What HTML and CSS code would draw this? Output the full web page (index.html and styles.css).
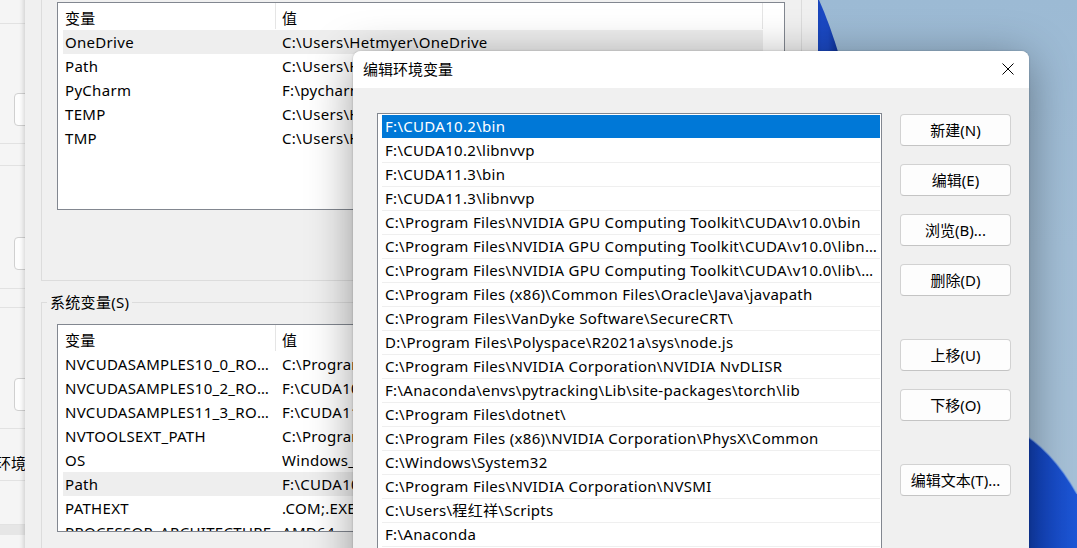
FILE: index.html
```html
<!DOCTYPE html>
<html lang="zh-CN">
<head>
<meta charset="utf-8">
<title>编辑环境变量</title>
<link rel="stylesheet" href="styles.css">
</head>
<body>
<div class="desktop">
  <svg class="bloom" width="1077" height="548" viewBox="0 0 1077 548" aria-hidden="true">
    <defs>
      <linearGradient id="bloomTop" x1="0" y1="0" x2="1" y2="0">
        <stop offset="0" stop-color="#1d4fd0"/>
        <stop offset="0.7" stop-color="#1a47c0"/>
        <stop offset="1" stop-color="#0e2f8e"/>
      </linearGradient>
      <linearGradient id="bloomBottom" x1="0" y1="0" x2="1" y2="0">
        <stop offset="0" stop-color="#0a3296"/>
        <stop offset="0.5" stop-color="#1446c0"/>
        <stop offset="1" stop-color="#1d56d6"/>
      </linearGradient>
    </defs>
    <path d="M800 0 L819 0 Q829 22 840 58 L800 58 Z" fill="url(#bloomTop)"/>
    <path d="M1005 424 Q1048 442 1077 494 L1077 548 L1005 548 Z" fill="url(#bloomBottom)"/>
    <path d="M1005 424 Q1048 442 1077 494" fill="none" stroke="#7ea6e6" stroke-width="1.5" opacity="0.6"/>
  </svg>

  <section class="win win-left">
    <div class="lw-block lw-top"></div>
    <div class="lw-block lw-card lw-card-a"><span class="lw-btn"></span></div>
    <div class="lw-block lw-gap lw-gap-a"></div>
    <div class="lw-block lw-card lw-card-b"><span class="lw-btn"></span></div>
    <div class="lw-block lw-gap lw-gap-b"></div>
    <div class="lw-block lw-card lw-card-c"><span class="lw-btn"></span></div>
    <div class="lw-block lw-text"><span class="lw-label">环境变量</span></div>
    <div class="lw-block lw-rest"></div>
    <div class="lw-band"></div>
  </section>

  <section class="win win-env">
    <div class="group group-user">
      <div class="listview">
        <div class="lv-head">
          <span class="lv-hcell lv-c1">变量</span>
          <span class="lv-hcell lv-c2">值</span>
          <span class="lv-hcell lv-c3"></span>
        </div>
        <div class="lv-row is-sel"><span class="lv-cell lv-c1">OneDrive</span><span class="lv-cell lv-c2">C:\Users\Hetmyer\OneDrive</span></div>
        <div class="lv-row"><span class="lv-cell lv-c1">Path</span><span class="lv-cell lv-c2">C:\Users\Hetmyer\AppData\Local\Microsoft\WindowsApps;</span></div>
        <div class="lv-row"><span class="lv-cell lv-c1">PyCharm</span><span class="lv-cell lv-c2">F:\pycharm\PyCharm 2021.1\bin;</span></div>
        <div class="lv-row"><span class="lv-cell lv-c1">TEMP</span><span class="lv-cell lv-c2">C:\Users\Hetmyer\AppData\Local\Temp</span></div>
        <div class="lv-row"><span class="lv-cell lv-c1">TMP</span><span class="lv-cell lv-c2">C:\Users\Hetmyer\AppData\Local\Temp</span></div>
      </div>
    </div>

    <fieldset class="group group-sys">
      <legend class="group-title">系统变量(S)</legend>
      <div class="listview">
        <div class="lv-head">
          <span class="lv-hcell lv-c1">变量</span>
          <span class="lv-hcell lv-c2">值</span>
          <span class="lv-hcell lv-c3"></span>
        </div>
        <div class="lv-row"><span class="lv-cell lv-c1">NVCUDASAMPLES10_0_ROOT</span><span class="lv-cell lv-c2">C:\ProgramData\NVIDIA Corporation\CUDA Samples\v10.0</span></div>
        <div class="lv-row"><span class="lv-cell lv-c1">NVCUDASAMPLES10_2_ROOT</span><span class="lv-cell lv-c2">F:\CUDA10.2</span></div>
        <div class="lv-row"><span class="lv-cell lv-c1">NVCUDASAMPLES11_3_ROOT</span><span class="lv-cell lv-c2">F:\CUDA11.3</span></div>
        <div class="lv-row"><span class="lv-cell lv-c1">NVTOOLSEXT_PATH</span><span class="lv-cell lv-c2">C:\Program Files\NVIDIA Corporation\NvToolsExt\</span></div>
        <div class="lv-row"><span class="lv-cell lv-c1">OS</span><span class="lv-cell lv-c2">Windows_NT</span></div>
        <div class="lv-row is-sel"><span class="lv-cell lv-c1">Path</span><span class="lv-cell lv-c2">F:\CUDA10.2\bin;F:\CUDA10.2\libnvvp;</span></div>
        <div class="lv-row"><span class="lv-cell lv-c1">PATHEXT</span><span class="lv-cell lv-c2">.COM;.EXE;.BAT;.CMD;.VBS;.VBE;.JS;.JSE;.WSF;.WSH;.MSC</span></div>
        <div class="lv-row"><span class="lv-cell lv-c1">PROCESSOR_ARCHITECTURE</span><span class="lv-cell lv-c2">AMD64</span></div>
      </div>
    </fieldset>
  </section>

  <section class="win win-edit">
    <header class="titlebar">
      <span class="title">编辑环境变量</span>
      <span class="close" aria-label="关闭">
        <svg width="12" height="12" viewBox="0 0 12 12"><path d="M0.5 0.5 L11.5 11.5 M11.5 0.5 L0.5 11.5" stroke="#000" stroke-width="1" fill="none"/></svg>
      </span>
    </header>
    <div class="edit-body">
      <div class="pathlist">
        <div class="pl-row is-active">F:\CUDA10.2\bin</div>
        <div class="pl-row">F:\CUDA10.2\libnvvp</div>
        <div class="pl-row">F:\CUDA11.3\bin</div>
        <div class="pl-row">F:\CUDA11.3\libnvvp</div>
        <div class="pl-row">C:\Program Files\NVIDIA GPU Computing Toolkit\CUDA\v10.0\bin</div>
        <div class="pl-row">C:\Program Files\NVIDIA GPU Computing Toolkit\CUDA\v10.0\libnvvp</div>
        <div class="pl-row">C:\Program Files\NVIDIA GPU Computing Toolkit\CUDA\v10.0\lib\x64</div>
        <div class="pl-row">C:\Program Files (x86)\Common Files\Oracle\Java\javapath</div>
        <div class="pl-row">C:\Program Files\VanDyke Software\SecureCRT\</div>
        <div class="pl-row">D:\Program Files\Polyspace\R2021a\sys\node.js</div>
        <div class="pl-row">C:\Program Files\NVIDIA Corporation\NVIDIA NvDLISR</div>
        <div class="pl-row">F:\Anaconda\envs\pytracking\Lib\site-packages\torch\lib</div>
        <div class="pl-row">C:\Program Files\dotnet\</div>
        <div class="pl-row">C:\Program Files (x86)\NVIDIA Corporation\PhysX\Common</div>
        <div class="pl-row">C:\Windows\System32</div>
        <div class="pl-row">C:\Program Files\NVIDIA Corporation\NVSMI</div>
        <div class="pl-row">C:\Users\程红祥\Scripts</div>
        <div class="pl-row">F:\Anaconda</div>
        <div class="pl-row">F:\Anaconda\Scripts</div>
      </div>
      <div class="btn-col">
        <button class="btn">新建(N)</button>
        <button class="btn">编辑(E)</button>
        <button class="btn">浏览(B)...</button>
        <button class="btn">删除(D)</button>
        <button class="btn btn-sep">上移(U)</button>
        <button class="btn">下移(O)</button>
        <button class="btn btn-sep">编辑文本(T)...</button>
      </div>
    </div>
  </section>
</div>
</body>
</html>
```

FILE: styles.css
```css
* { box-sizing: border-box; }

html, body {
  margin: 0;
  padding: 0;
}

body {
  font-family: "Noto Sans", "Noto Sans CJK SC", sans-serif;
  font-size: 15px;
  letter-spacing: 0.3px;
  color: #000;
}

.desktop {
  position: relative;
  width: 1077px;
  height: 548px;
  overflow: hidden;
  background: linear-gradient(180deg, #9cbad4 0%, #a3bfd7 45%, #a7c1d7 100%);
}

.bloom {
  position: absolute;
  left: 0;
  top: 0;
}

.win {
  position: absolute;
}

/* ---------- left (partially hidden) window ---------- */
.win-left {
  left: -300px;
  top: 0;
  width: 360px;
  height: 548px;
  background: #f5f5f5;
  display: flex;
  flex-direction: column;
}

.lw-block {
  border-bottom: 1px solid #e2e2e2;
  padding-left: 314px;
  flex: none;
}

.lw-top { height: 24px; }
.lw-card-a { height: 120px; padding-top: 69px; }
.lw-gap-a { height: 22px; }
.lw-card-b { height: 123px; padding-top: 71px; }
.lw-gap-b { height: 19px; }
.lw-card-c { height: 121px; padding-top: 70px; }

.lw-btn {
  display: block;
  width: 60px;
  height: 33px;
  border: 1px solid #d0d0d0;
  border-radius: 4px;
  background: #fdfdfd;
}

.lw-text {
  height: 52px;
  padding-left: 296px;
  padding-top: 24px;
  line-height: 20px;
  white-space: nowrap;
  letter-spacing: 0;
}

.lw-rest { height: 44px; }

.lw-band {
  height: 10px;
  background: #e6e6e6;
  flex: none;
}

/* ---------- environment variables window ---------- */
.win-env {
  left: 25px;
  top: -40px;
  width: 793px;
  height: 640px;
  background: #f0f0f0;
  padding: 0 16px;
  box-shadow: -1px 0 5px rgba(0, 0, 0, 0.18);
}

.group {
  border: 1px solid #dcdcdc;
  margin: 0;
  min-width: 0;
}

.group-user {
  padding: 41px 16px 70px 15px;
}

.group-sys {
  margin-top: 12px;
  padding: 13px 16px 20px 15px;
}

.group-title {
  margin-left: -10px;
  padding: 0 3px;
  line-height: 18px;
  font-size: 15px;
}

.listview {
  height: 208px;
  border: 1px solid #828790;
  background: #fff;
  overflow: hidden;
}

.lv-head {
  display: flex;
  height: 27px;
}

.lv-hcell {
  display: block;
  height: 26px;
  padding-top: 2px;
  line-height: 26px;
  border-right: 1px solid #e5e5e5;
  white-space: nowrap;
}

.lv-head .lv-c1 { width: 218px; padding-left: 7px; }
.lv-head .lv-c2 { width: 487px; padding-left: 6px; }
.lv-head .lv-c3 { flex: 1; border-right: 0; }

.lv-row {
  display: flex;
  width: 700px;
  height: 24px;
  margin-left: 5px;
  line-height: 24px;
  white-space: nowrap;
}

.lv-row.is-sel { background: #eeeeee; }

.lv-cell {
  display: block;
  overflow: hidden;
  text-overflow: ellipsis;
  white-space: nowrap;
}

.lv-row .lv-c1 { width: 213px; padding-left: 2px; padding-right: 3px; }
.lv-row .lv-c2 { flex: 1; padding-left: 6px; }

/* ---------- edit dialog ---------- */
.win-edit {
  left: 353px;
  top: 51px;
  width: 676px;
  height: 540px;
  background: #f0f0f0;
  border-radius: 8px 8px 0 0;
  overflow: hidden;
  box-shadow: 0 8px 46px rgba(0, 0, 0, 0.38), 0 0 2px rgba(0, 0, 0, 0.25);
}

.titlebar {
  display: flex;
  align-items: center;
  height: 37px;
  background: #fff;
  padding-left: 10px;
}

.title {
  font-size: 15px;
  line-height: 20px;
  letter-spacing: 0;
  margin-top: -2px;
}

.close {
  margin-left: auto;
  width: 42px;
  height: 37px;
  display: flex;
  align-items: center;
  justify-content: center;
  padding-bottom: 2px;
}

.edit-body {
  display: flex;
  align-items: flex-start;
  padding: 25px 0 0 24px;
  gap: 18px;
}

.pathlist {
  width: 505px;
  height: 460px;
  border: 1px solid #828790;
  background: #fff;
  padding: 1px 1px 0 4px;
  overflow: hidden;
}

.pl-row {
  height: 24px;
  line-height: 23px;
  padding: 0 2px 0 3px;
  border-bottom: 1px solid #efefef;
  white-space: nowrap;
  overflow: hidden;
  text-overflow: ellipsis;
}

.pl-row.is-active {
  background: #0078d7;
  color: #fff;
  height: 23px;
  margin-bottom: 1px;
  border-bottom: 0;
}

.btn-col {
  display: flex;
  flex-direction: column;
  gap: 18px;
  width: 111px;
  margin-top: 1px;
}

.btn {
  width: 111px;
  height: 32px;
  padding: 0 0 2px;
  font-family: inherit;
  font-size: 15px;
  letter-spacing: 0;
  color: #000;
  background: #fdfdfd;
  border: 1px solid #d2d2d2;
  border-bottom-color: #c4c4c4;
  border-radius: 4px;
}

.btn-sep {
  margin-top: 25px;
}
```
